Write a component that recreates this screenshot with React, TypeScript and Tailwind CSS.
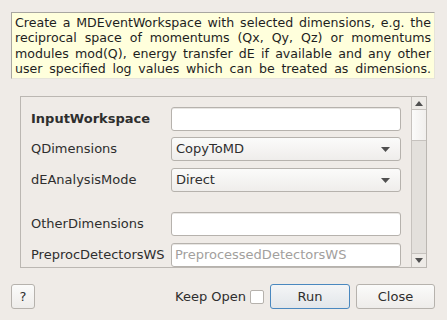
import { ReactNode } from 'react';

const font = { fontFamily: '"DejaVu Sans", "Liberation Sans", sans-serif' };

const description = [
  'Create a MDEventWorkspace with selected dimensions, e.g. the',
  'reciprocal space of momentums (Qx, Qy, Qz) or momentums',
  'modules mod(Q), energy transfer dE if available and any other',
  'user specified log values which can be treated as dimensions.',
];

function Caret() {
  return (
    <svg width="9" height="5" viewBox="0 0 9 5" className="shrink-0">
      <path d="M0 0 H9 L4.5 5 Z" fill="#505050" />
    </svg>
  );
}

function Row({ label, bold, children }: { label: string; bold?: boolean; children: ReactNode }) {
  return (
    <div className="flex items-center h-[24px]">
      <div className={`w-[140px] text-[13px] text-[#2e2e2e] whitespace-nowrap ${bold ? 'font-bold' : ''}`}>
        {label}
      </div>
      <div className="w-[230px] h-[24px]">{children}</div>
    </div>
  );
}

function TextBox({ placeholder }: { placeholder?: string }) {
  return (
    <div className="h-full w-full bg-white border border-[#b6b2ad] rounded-[3px] flex items-center px-[3px] text-[13px] text-[#a2a09d] shadow-[inset_0_1px_0_#e8e6e3]">
      {placeholder}
    </div>
  );
}

function Combo({ value }: { value: string }) {
  return (
    <div className="h-full w-full border border-[#b6b2ad] rounded-[3px] flex items-center justify-between pl-[4px] pr-[10px] text-[13px] text-[#2e2e2e] bg-gradient-to-b from-[#fbfbfa] to-[#efedeb]">
      <span>{value}</span>
      <Caret />
    </div>
  );
}

function Scrollbar() {
  return (
    <div className="w-[15px] h-full border-l border-[#c6c2be] flex flex-col bg-[#e3e0dc]">
      <div className="h-[13px] bg-[#eeebe7] border-b border-[#c6c2be] flex items-center justify-center">
        <svg width="8" height="5" viewBox="0 0 8 5">
          <path d="M0 5 H8 L4 0 Z" fill="#505050" />
        </svg>
      </div>
      <div className="h-[31px] bg-gradient-to-r from-[#fbfbfa] to-[#f1efed] border-b border-[#c6c2be]" />
      <div className="flex-1" />
      <div className="h-[14px] bg-[#eeebe7] border-t border-[#c6c2be] flex items-center justify-center">
        <svg width="8" height="5" viewBox="0 0 8 5">
          <path d="M0 0 H8 L4 5 Z" fill="#505050" />
        </svg>
      </div>
    </div>
  );
}

function Button({ children, primary, className }: { children: ReactNode; primary?: boolean; className?: string }) {
  return (
    <div
      className={`h-[25px] rounded-[3px] border flex items-center justify-center text-[13px] text-[#2e2e2e] bg-gradient-to-b ${
        primary ? 'border-[#4a88bf] from-[#f4f5f6] to-[#e2e6ea]' : 'border-[#b6b2ad] from-[#fbfbfa] to-[#eeecea]'
      } ${className ?? ''}`}
    >
      {children}
    </div>
  );
}

export default function App() {
  return (
    <div className="w-[447px] h-[320px] bg-[#efebe7] flex flex-col pt-[12px] overflow-hidden" style={font}>
      <div className="ml-[11px] w-[424px] h-[67px] bg-[#ffffdc] border border-[#a8a6a0] border-r-[#e6e4da] border-b-[#e6e4da] px-[3px] pt-[2px] text-[12.6px] leading-[15.4px] text-[#1e1e1e]">
        {description.map((line) => (
          <div key={line} className="text-justify [text-align-last:justify]">
            {line}
          </div>
        ))}
      </div>

      <div className="mt-[17px] ml-[20px] w-[407px] h-[172px] border border-[#bbb7b2] flex overflow-hidden">
        <div className="flex-1 pl-[10px] pt-[10px] flex flex-col">
          <Row label="InputWorkspace" bold>
            <TextBox />
          </Row>
          <div className="h-[6px]" />
          <Row label="QDimensions">
            <Combo value="CopyToMD" />
          </Row>
          <div className="h-[7px]" />
          <Row label="dEAnalysisMode">
            <Combo value="Direct" />
          </Row>
          <div className="h-[20px]" />
          <Row label="OtherDimensions">
            <TextBox />
          </Row>
          <div className="h-[7px]" />
          <Row label="PreprocDetectorsWS">
            <TextBox placeholder="PreprocessedDetectorsWS" />
          </Row>
        </div>
        <Scrollbar />
      </div>

      <div className="mt-[16px] flex items-center">
        <Button className="ml-[11px] w-[24px]">?</Button>
        <div className="ml-auto flex items-center">
          <span className="text-[13px] text-[#2e2e2e]">Keep Open</span>
          <div className="ml-[4px] w-[14px] h-[14px] bg-white border border-[#b6b2ad] rounded-[2px]" />
          <Button primary className="ml-[6px] w-[80px]">Run</Button>
          <Button className="ml-[6px] w-[79px] mr-[12px]">Close</Button>
        </div>
      </div>
    </div>
  );
}
